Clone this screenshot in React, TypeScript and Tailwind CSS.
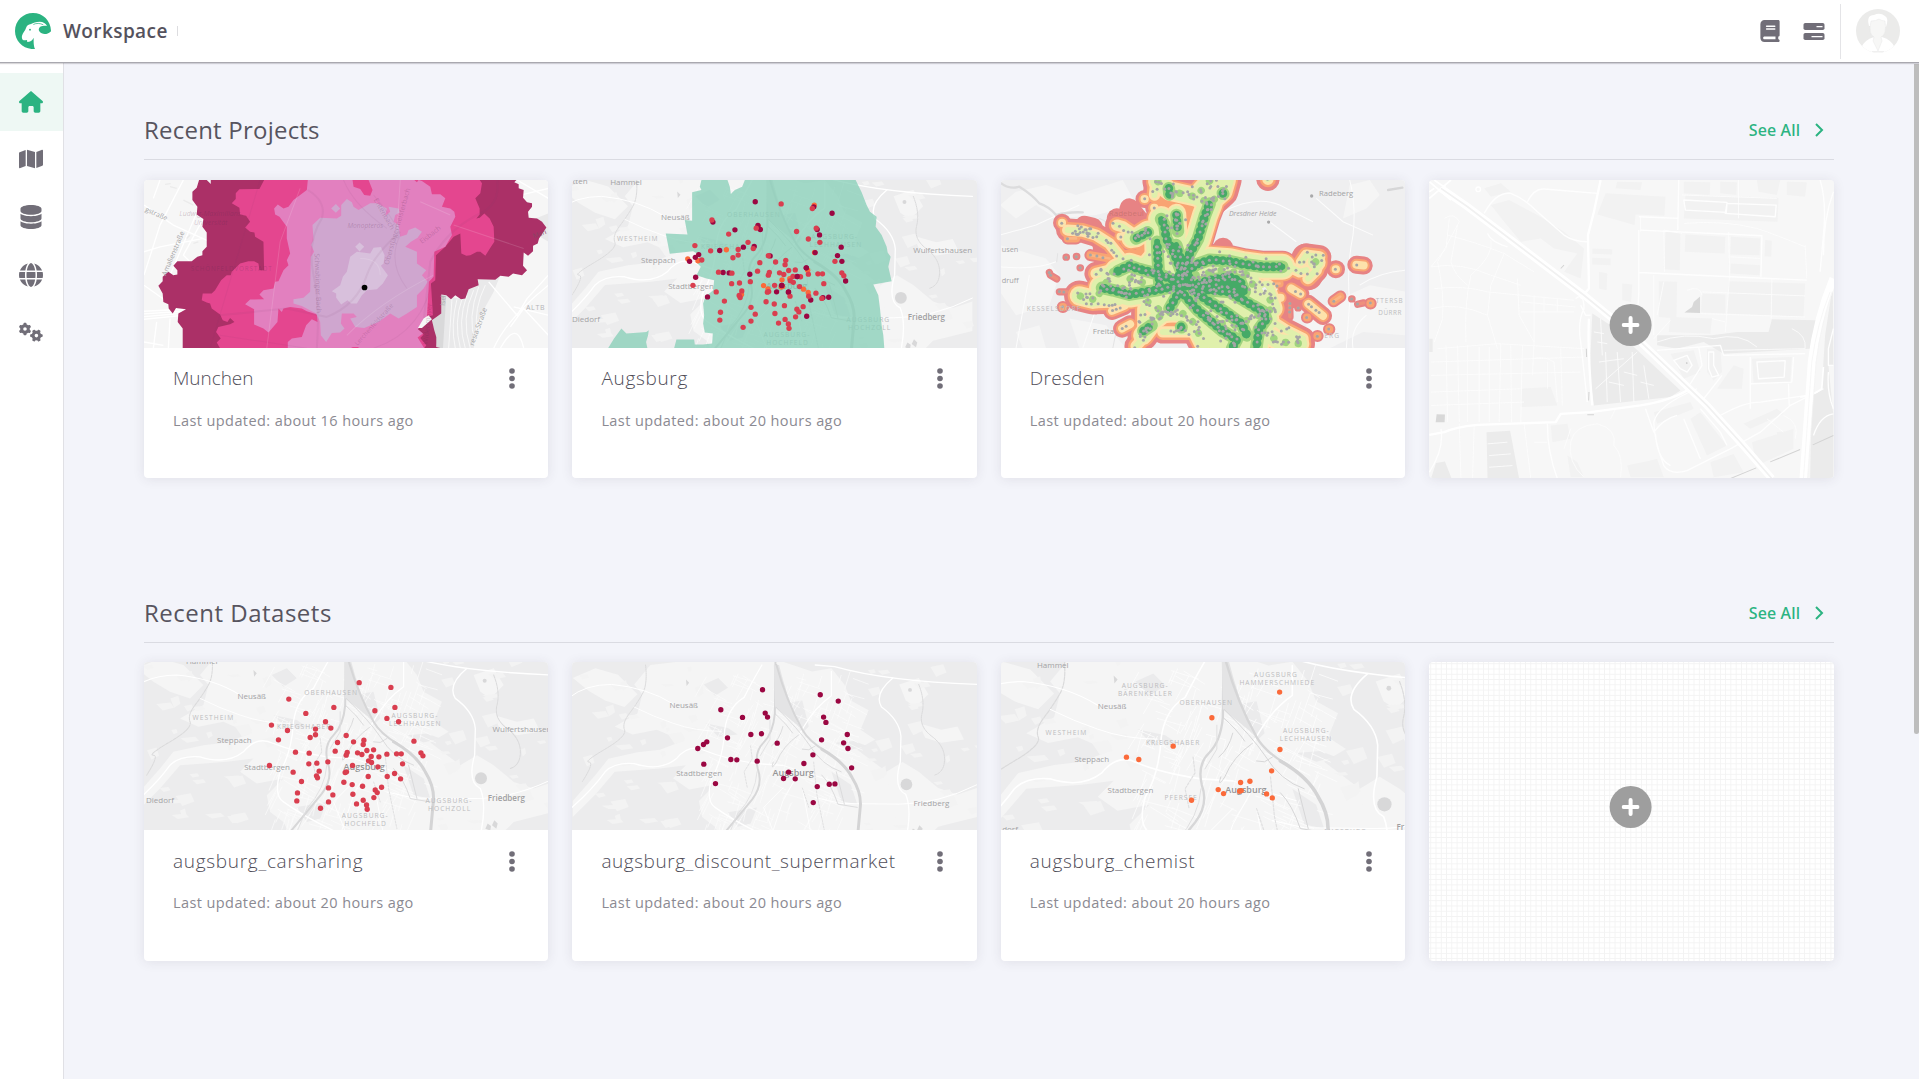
import type { ReactNode } from 'react';
import { FaHouse, FaMap, FaDatabase, FaGlobe, FaGears, FaBook } from 'react-icons/fa6';

type Pt = [number, number];

/* ---------- point data ---------- */

const carsharing: Pt[] = [
  [657, 83], [752, 97], [446, 132], [497, 175], [581, 157], [704, 167], [764, 157], [740, 190], [775, 200], [394, 210],
  [442, 226], [415, 254], [556, 200], [572, 219], [526, 222], [526, 239], [510, 247], [592, 262], [618, 241], [640, 260],
  [671, 255], [669, 268], [585, 288], [466, 291], [507, 294], [621, 292], [618, 300], [652, 293], [665, 298], [680, 286],
  [700, 284], [693, 304], [716, 305], [740, 297], [769, 296], [783, 296], [821, 258], [842, 293], [848, 302], [787, 326],
  [506, 326], [530, 324], [563, 320], [537, 348], [529, 362], [532, 368], [388, 331], [459, 351], [484, 379], [472, 413],
  [470, 437], [541, 459], [565, 398], [578, 419], [565, 440], [611, 381], [619, 350], [615, 352], [637, 331], [685, 317],
  [694, 322], [713, 335], [684, 364], [741, 364], [763, 355], [781, 371], [636, 388], [667, 393], [638, 417], [649, 446],
  [669, 435], [679, 449], [681, 462], [701, 427], [705, 404], [711, 412], [724, 396],
];

const supermarkets: Pt[] = [
  [583, 104], [756, 119], [810, 138], [458, 164], [523, 187], [591, 174], [598, 186], [766, 186], [773, 202], [548, 238],
  [580, 236], [478, 248], [416, 260], [406, 268], [389, 280], [627, 264], [760, 254], [837, 238], [826, 263], [839, 280],
  [734, 299], [407, 327], [488, 313], [506, 314], [567, 318], [707, 325], [661, 351], [646, 370], [681, 371], [850, 338],
  [442, 385], [747, 394], [783, 387], [800, 386], [735, 442],
];

const chemists: Pt[] = [
  [850, 111], [647, 188], [531, 273], [391, 306], [428, 313], [851, 283], [826, 347], [733, 382], [761, 378], [666, 403],
  [682, 415], [730, 408], [735, 406], [811, 416], [828, 428], [586, 435],
];

const shift = (pts: Pt[], k: number, dx: number, dy: number): Pt[] => pts.map(([x, y]) => [x * k + dx, y * k + dy]);

function Dots({ pts, fill, r = 8 }: { pts: Pt[]; fill: string; r?: number }) {
  return (
    <g fill={fill}>
      {pts.map(([x, y], i) => (
        <circle key={i} cx={x} cy={y} r={r} />
      ))}
    </g>
  );
}

/* Small deterministic generator, so that the scattered stops stay put between renders. */
function makeRandom(seed: number) {
  let s = seed;
  return () => {
    s = (s * 1664525 + 1013904223) % 4294967296;
    return s / 4294967296;
  };
}

/* ---------- map pieces ---------- */

function MapFrame({ children, x = 12, y = 15 }: { children: ReactNode; x?: number; y?: number }) {
  return (
    <svg className="block h-[168.3px] w-full rounded-t" viewBox={`${x} ${y} 1212 504`} preserveAspectRatio="none" aria-hidden="true">
      {children}
    </svg>
  );
}

type Label = { x: number; y: number; t: string; kind?: 'town' | 'district' | 'city' | 'bold' };

function Labels({ items }: { items: Label[] }) {
  return (
    <g fontFamily="'Open Sans', sans-serif" textAnchor="middle">
      {items.map(({ x, y, t, kind = 'town' }, i) => {
        if (kind === 'district')
          return (
            <text key={i} x={x} y={y + 7} fontSize="20" letterSpacing="3" fill="#bcbcbe">
              {t}
            </text>
          );
        if (kind === 'city')
          return (
            <text key={i} x={x} y={y + 9} fontSize="27" fontWeight="600" fill="#959597">
              {t}
            </text>
          );
        if (kind === 'bold')
          return (
            <text key={i} x={x} y={y + 8} fontSize="24" fontWeight="600" fill="#9f9fa1">
              {t}
            </text>
          );
        return (
          <text key={i} x={x} y={y + 8} fontSize="24" fill="#a3a3a5">
            {t}
          </text>
        );
      })}
    </g>
  );
}

const streetRandom = makeRandom(7);
const streets = Array.from({ length: 230 }, () => {
  const x = 400 + streetRandom() * 460;
  const y = 20 + streetRandom() * 500;
  const a = (streetRandom() < 0.5 ? 0.25 : 1.8) + streetRandom() * 0.35;
  const l = 25 + streetRandom() * 60;
  return `M${x.toFixed(0)} ${y.toFixed(0)}l${(Math.cos(a) * l).toFixed(0)} ${(Math.sin(a) * l).toFixed(0)}`;
}).join('');
const patchRandom = makeRandom(91);
const patches = Array.from({ length: 70 }, () => {
  const west = patchRandom() < 0.55;
  const x = west ? patchRandom() * 380 : 880 + patchRandom() * 380;
  const y = patchRandom() * 560;
  const w = 10 + patchRandom() * 38;
  const h = 6 + patchRandom() * 24;
  return `M${x.toFixed(0)} ${y.toFixed(0)}l${w.toFixed(0)} ${(-h / 3).toFixed(0)} ${(w / 4).toFixed(0)} ${h.toFixed(0)} ${(-w * 0.8).toFixed(0)} ${(h / 2).toFixed(0)}z`;
}).join('');

function AugsburgBase({ k = 1, dx = 0, dy = 0 }: { k?: number; dx?: number; dy?: number }) {
  return (
    <>
      <rect x="0" y="0" width="1240" height="540" fill="#ececed" />
      <g transform={`translate(${dx} ${dy}) scale(${k})`} fill="none" strokeLinejoin="round" strokeLinecap="round">
        <g fill="#f5f5f5">
          <path d="M230 0 L400 -20 520 -20 640 -10 730 20 790 10 830 60 850 110 905 140 880 200 925 230 870 262 960 330 985 400 1000 540 860 560 640 560 460 560 430 500 390 470 380 420 430 370 350 385 300 350 340 310 260 320 120 330 60 400 -10 470 -10 420 60 340 100 290 190 270 260 262 330 235 250 200 175 215 120 190 190 150 205 90 180 60Z" />
          <path d="M-10 40 L60 10 130 30 190 90 150 130 90 110 40 80Z M960 330 L1010 300 1060 330 1120 380 1180 400 1240 380 1240 470 1120 500 1080 540 1000 540Z" />
          <path d="M1060 180 L1130 200 1180 190 1200 230 1130 240 1080 225Z M1000 60 L1060 40 1090 90 1050 130 1020 110Z" />
        </g>
        <path fill="#ebebec" d="M400 180 L470 195 500 215 440 222Z M395 60 L440 40 470 70 430 95Z M800 240 L860 235 900 250 850 262Z M470 455 L560 440 540 490 500 500Z M790 330 L850 370 870 430 820 420Z M640 120 L700 110 720 190 700 210Z" />
        <path fill="#f3f3f3" d={patches} />
        <path stroke="#fcfcfc" strokeWidth="2" d={streets} />
        <path
          stroke="#dadadb"
          strokeWidth="3"
          d="M215 0 Q222 60 205 90 T165 150 T150 200 T90 260 T40 300 T20 360 M1060 60 Q1080 110 1070 150 T1100 220 T1140 290 T1110 340"
          strokeDasharray="9 3"
        />
        <g stroke="#fff" strokeWidth="4">
          <path d="M-60 480 Q40 400 90 330 Q120 300 180 305 Q260 330 310 290 Q350 240 400 265 Q460 290 560 305 L640 310" />
          <path d="M575 0 Q540 60 520 100 Q470 130 460 200 Q455 290 420 350 Q400 420 430 440 Q500 490 610 540" />
          <path d="M740 0 L800 5 Q960 50 1240 60" />
          <path d="M790 20 L790 95 Q740 130 705 190 L690 215 M980 40 Q920 90 945 130 Q1000 170 1005 220 L1003 300 Q980 380 1020 400 Q1040 450 1020 540" />
          <path d="M-20 100 Q30 60 110 60 Q220 70 300 120 M740 410 L820 428 1000 430 Q1120 430 1240 370" strokeWidth="3" />
          <path d="M180 130 Q240 160 300 180 Q370 205 450 205 M640 310 L700 330 800 360 M600 540 L640 420 690 330 M620 540 L580 440 640 380 M700 380 L730 540" strokeWidth="2.5" />
        </g>
        <path stroke="#d7d7d8" strokeWidth="6" d="M617 -20 L615 150 Q610 210 580 240 Q550 270 562 320 Q580 370 545 415 Q500 470 450 530" />
        <path stroke="#dfdfe0" strokeWidth="2.5" d="M560 330 Q555 400 500 460 L470 530 M600 170 L600 230 570 280" />
        <path fill="#e4e4e5" d="M612 0 L628 0 Q650 90 690 190 L640 150 615 130Z" />
        <path stroke="#d6d6d7" strokeWidth="6" d="M620 0 Q650 110 700 200 Q720 235 770 265" />
        <path stroke="#d4d4d5" strokeWidth="9" d="M760 260 Q830 300 855 350 Q880 390 880 430 L870 540" />
        <path stroke="#d6d6d7" strokeWidth="2.5" d="M618 130 Q690 200 720 245 Q760 310 820 330 M615 150 Q650 180 670 210 M690 215 Q640 250 620 300 Q600 330 610 300 M700 260 L720 262 740 250 M760 340 Q790 370 810 430 L870 440 M640 190 Q630 230 605 250 M805 330 L830 430" />
        <path stroke="#e0e0e1" strokeWidth="3" strokeDasharray="6 4" d="M540 250 L545 290 520 330 530 380 M735 300 L745 400 770 520 M700 380 L720 440" />
        <g fill="#d8d8d9">
          <circle cx="1022" cy="369" r="18" />
          <circle cx="1033" cy="77" r="6" />
          <path d="M1035 520 L1042 505 1052 512 1050 526Z M1055 510 L1062 495 1072 505 1068 520Z M340 45 L350 55 342 65Z" />
        </g>
      </g>
    </>
  );
}

/* ---------- thumbnails ---------- */

const munichRoads =
  'M12 90 L100 150 320 250 M12 230 L60 215 190 190 M130 15 L60 150 12 300 M60 15 L40 70 M12 330 L110 400 M12 408 L130 402 M12 416 L130 408 M12 424 L130 414 M12 432 L130 420 M12 500 L70 510 M50 440 L40 519 M90 430 L85 519 M180 90 L90 300 M190 130 L130 240 160 270 M1130 15 L1224 70 M1140 60 L1224 40 M1060 519 Q1100 430 1224 330 M1080 519 Q1130 430 1150 519 M1110 455 L1150 400 1224 480 M1045 320 L1130 420 1160 370 1224 300 M1120 395 L1224 420';

function MunichMap() {
  return (
    <MapFrame>
      <rect x="0" y="0" width="1240" height="540" fill="#f6f6f6" />
      <path fill="#e9e9ea" d="M1015 312 L1065 314 1080 300 1060 350 1010 440 1000 519 905 519 918 360 960 372 985 342Z M1185 130 L1224 115 1224 200 1190 180Z" />
      <path fill="#d9d9da" d="M903 358 L918 362 908 519 890 519 875 435 903 415Z" />
      <path fill="none" stroke="#fff" strokeWidth="4" d={munichRoads} />
      <path
        fill="none"
        stroke="#fbfbfb"
        strokeWidth="2.5"
        d="M935 372 L925 519 M950 372 Q930 450 945 519 M965 372 Q940 440 960 519 M980 360 Q950 440 975 519 M1000 345 Q960 430 990 519 M1015 335 Q980 430 1005 500 M1035 330 Q1000 400 1010 470"
      />
      <path fill="none" stroke="#ebebeb" strokeWidth="4" d="M130 75 L160 90 M90 35 L110 40 M75 28 L92 26 M140 190 L150 180 M160 205 L175 200" />
      <path
        fill="#ab3067"
        d="M177 15 L170 38 157 50 157 75 172 95 170 118 190 132 187 155 200 172 200 215 187 228 187 240 172 245 155 258 112 258 100 272 112 285 112 298 100 300 85 290 68 305 68 318 55 332 68 355 70 380 85 387 86 400 98 415 108 398 138 402 115 415 113 440 128 460 128 519 903 519 888 515 888 485 882 465 875 435 903 415 903 358 918 360 932 372 945 360 962 372 975 370 985 342 1015 330 1012 312 1065 314 1080 302 1105 305 1118 295 1145 300 1160 285 1148 272 1150 232 1163 242 1178 228 1178 212 1192 205 1196 190 1218 157 1205 140 1190 130 1165 128 1163 110 1175 95 1175 85 1160 82 1148 68 1150 45 1135 40 1135 28 1122 22 1128 15Z"
      />
      <path fill="#f6f6f6" d="M200 15 L212 27 212 15Z" />
      <path fill="#e4468f" d="M372 15 L358 42 298 43 287 55 287 72 275 85 298 98 300 118 318 122 330 140 315 157 330 170 343 172 345 185 370 200 372 285 358 285 355 265 342 258 325 258 300 265 275 290 272 300 260 300 243 315 225 345 215 355 188 355 185 375 200 382 210 385 215 400 240 418 248 435 262 440 270 428 283 440 270 447 235 455 228 470 242 490 230 502 240 519 852 519 858 510 840 488 850 478 828 458 858 425 878 420 872 325 885 315 887 240 915 215 940 185 960 175 963 235 978 242 990 240 1010 230 1020 230 1035 242 1052 215 1062 200 1060 155 1048 130 1032 115 1018 128 1008 130 1018 118 1018 100 1005 70 1020 55 1025 25 1018 15Z" />
      <path fill="#e280bf" d="M503 15 L500 45 460 75 445 95 430 100 413 88 402 100 405 118 418 125 440 155 440 190 450 235 440 255 445 270 430 285 415 318 405 320 400 340 370 345 358 358 372 372 330 373 315 387 342 402 342 448 370 460 385 472 412 440 415 400 425 410 430 400 450 395 485 400 500 408 530 418 532 440 515 432 498 450 485 485 455 490 443 500 443 519 640 519 632 515 657 515 652 519 852 519 832 487 848 475 833 462 860 425 866 320 880 305 882 230 915 215 935 180 930 155 945 125 942 110 930 100 905 95 915 70 900 58 875 58 870 35 845 18 835 15 830 22 822 15Z" />
      <path fill="#e4468f" d="M637 15 L640 35 660 42 672 60 690 62 697 45 685 15Z" />
      <path
        fill="#cfa6cf"
        d="M517 150 L540 128 590 130 603 122 603 90 620 72 635 82 640 95 655 105 690 85 710 85 740 100 735 122 750 110 745 95 775 100 778 112 765 120 760 140 775 150 780 185 800 178 805 165 825 157 845 170 832 188 812 200 795 215 830 230 830 265 858 285 845 300 862 320 850 340 830 360 830 395 800 415 775 430 750 415 715 440 672 458 645 455 630 430 650 425 640 415 605 415 602 445 613 460 600 472 575 473 558 500 542 480 540 440 528 415 485 392 460 385 460 372 490 368 510 350 512 245 522 230 513 210 520 195Z M573 100 L587 87 600 100 587 113Z"
      />
      <path
        fill="#d8c0dc"
        d="M575 348 L600 330 608 305 620 290 630 245 650 230 690 235 700 218 722 216 733 240 730 265 722 272 743 300 728 325 710 342 680 345 665 360 650 385 632 385 622 375 603 388 588 368 588 355Z M645 215 L658 202 672 215 658 229Z"
      />
      <g fill="none" stroke="#7b3b70" strokeOpacity="0.08" strokeWidth="6">
        <path d="M503 45 Q560 80 545 130 Q500 200 520 300 Q540 380 530 519 M780 170 Q700 240 680 300 Q650 390 560 425 L440 400 240 420 M1070 15 Q1080 80 1030 110 Q920 160 870 260 L850 440" />
        <path strokeWidth="3" d="M700 60 Q760 130 780 180 Q740 260 800 340 M610 15 Q640 90 740 160 M240 480 L500 519 M360 15 L210 519 M700 519 Q850 470 880 300" />
      </g>
      <g stroke="#fff" strokeOpacity="0.14" strokeWidth="3" fill="none">
        <path d="M660 250 Q720 250 720 300 M840 80 L930 120 M940 150 Q1060 190 1150 220 M480 40 L420 200 380 519 M620 480 Q720 380 880 300 M780 15 L770 170" />
      </g>
      <path fill="#f6f6f6" d="M833 458 L850 430 865 420 875 432 845 458Z" />
      <g fontFamily="'Open Sans', sans-serif" fontSize="23" fill="#a3a3a5">
        <text x="14" y="108" transform="rotate(24 14 108)" fontSize="20">gstraße</text>
        <text x="78" y="303" transform="rotate(-67 78 303)" fontSize="21">Amalienstraße</text>
        <text x="1000" y="512" transform="rotate(-70 1000 512)" fontSize="21">resia-Straße</text>
        <text x="1180" y="190" transform="rotate(-20 1180 190)" fontSize="20" fill="#8a4464">Mari</text>
        <text x="914" y="392" transform="rotate(-87 914 392)" fontSize="20">Isel</text>
        <g fill="#5b2a50" fillOpacity="0.26">
          <text x="118" y="122" fontSize="21" fontStyle="italic">Ludwig-Maximilians-</text>
          <text x="162" y="150" fontSize="21" fontStyle="italic">Universität</text>
          <text x="152" y="288" fontSize="19" letterSpacing="2.4">SCHÖNFELDVORSTADT</text>
          <text x="622" y="160" fontSize="20" fontStyle="italic">Monopteros</text>
          <text x="523" y="235" transform="rotate(88 523 235)" fontSize="21">Schwabinger Bach</text>
          <text x="745" y="270" transform="rotate(-74 745 270)" fontSize="21">Oberstjägermeisterbach</text>
          <text x="845" y="207" transform="rotate(-38 845 207)" fontSize="21">Eisbach</text>
          <text x="652" y="512" transform="rotate(-48 652 512)" fontSize="19">Lerchenfeldstraße</text>
          <text x="700" y="75" transform="rotate(60 700 75)" fontSize="21">Entenbach</text>
          <text x="862" y="508" transform="rotate(-84 862 508)" fontSize="21">Widenmayer</text>
        </g>
        <text x="1157" y="404" fontSize="21" letterSpacing="2" fill="#b4b4b6">ALTB</text>
      </g>
      <circle cx="673" cy="337" r="8.5" fill="#000" />
    </MapFrame>
  );
}

function AugsburgProjectMap() {
  return (
    <MapFrame>
      <AugsburgBase k={0.983} dx={-7} dy={5} />
      <Labels
        items={[
          { x: 36, y: 19, t: 'tten' },
          { x: 174, y: 23, t: 'Hammel' },
          { x: 322, y: 127, t: 'Neusäß' },
          { x: 271, y: 257, t: 'Steppach' },
          { x: 369, y: 334, t: 'Stadtbergen' },
          { x: 54, y: 431, t: 'Diedorf' },
          { x: 1123, y: 225, t: 'Wulfertshausen' },
          { x: 1074, y: 425, t: 'Friedberg', kind: 'bold' },
          { x: 655, y: 333, t: 'Augsburg', kind: 'city' },
          { x: 209, y: 190, t: 'WESTHEIM', kind: 'district' },
          { x: 557, y: 118, t: 'OBERHAUSEN', kind: 'district' },
          { x: 480, y: 215, t: 'KRIEGSHABER', kind: 'district' },
          { x: 799, y: 184, t: 'AUGSBURG-', kind: 'district' },
          { x: 803, y: 208, t: 'LECHHAUSEN', kind: 'district' },
          { x: 900, y: 433, t: 'AUGSBURG', kind: 'district' },
          { x: 904, y: 457, t: 'HOCHZOLL', kind: 'district' },
          { x: 656, y: 477, t: 'AUGSBURG-', kind: 'district' },
          { x: 658, y: 501, t: 'HOCHFELD', kind: 'district' },
        ]}
      />
      <path
        fill="#86cfb7"
        fillOpacity="0.76"
        d="M372 52 L400 45 395 35 400 15 478 15 485 35 488 57 500 45 522 35 530 15 862 15 880 52 895 90 905 110 925 125 922 155 940 180 955 215 958 232 967 245 960 275 970 318 915 328 930 360 935 400 940 450 945 480 948 519 318 519 325 493 378 493 380 508 405 508 432 505 434 475 410 472 405 445 408 420 405 385 412 365 435 345 438 315 415 310 385 300 398 275 385 262 395 240 375 228 305 236 293 175 358 178 350 135 372 137Z M120 519 L138 490 160 460 175 475 235 470 242 465 240 480 234 500 238 519Z"
      />
      <Dots pts={shift(chemists, 0.826, 36, -1.6)} fill="#fb6a3a" />
      <Dots pts={shift(supermarkets, 1.0145, -30.3, -25.4)} fill="#9b0742" />
      <Dots pts={shift(carsharing, 0.983, -7, 5)} fill="#d93e4f" />
      <Dots pts={[[641, 331], [661, 350], [687, 304], [714, 278]]} fill="#9b0742" />
    </MapFrame>
  );
}

function CarsharingMap() {
  return (
    <MapFrame y={21}>
      <AugsburgBase />
      <Labels
        items={[
          { x: 185, y: 18, t: 'Hammel' },
          { x: 335, y: 124, t: 'Neusäß' },
          { x: 283, y: 257, t: 'Steppach' },
          { x: 381, y: 335, t: 'Stadtbergen' },
          { x: 60, y: 434, t: 'Diedorf' },
          { x: 1145, y: 223, t: 'Wulfertshausen' },
          { x: 1098, y: 428, t: 'Friedberg', kind: 'bold' },
          { x: 672, y: 334, t: 'Augsburg', kind: 'city' },
          { x: 220, y: 188, t: 'WESTHEIM', kind: 'district' },
          { x: 573, y: 114, t: 'OBERHAUSEN', kind: 'district' },
          { x: 492, y: 215, t: 'KRIEGSHABER', kind: 'district' },
          { x: 824, y: 183, t: 'AUGSBURG-', kind: 'district' },
          { x: 825, y: 207, t: 'LECHHAUSEN', kind: 'district' },
          { x: 926, y: 436, t: 'AUGSBURG-', kind: 'district' },
          { x: 928, y: 460, t: 'HOCHZOLL', kind: 'district' },
          { x: 675, y: 481, t: 'AUGSBURG-', kind: 'district' },
          { x: 676, y: 505, t: 'HOCHFELD', kind: 'district' },
        ]}
      />
      <Dots pts={carsharing} fill="#d93e4f" />
    </MapFrame>
  );
}

function SupermarketMap() {
  return (
    <MapFrame y={21}>
      <AugsburgBase k={0.969} dx={24} dy={30} />
      <Labels
        items={[
          { x: 347, y: 150, t: 'Neusäß' },
          { x: 393, y: 355, t: 'Stadtbergen' },
          { x: 1089, y: 443, t: 'Friedberg' },
          { x: 675, y: 353, t: 'Augsburg', kind: 'city' },
        ]}
      />
      <Dots pts={supermarkets} fill="#9b0742" />
    </MapFrame>
  );
}

function ChemistMap() {
  return (
    <MapFrame x={15} y={21}>
      <AugsburgBase k={1.19} dx={-52} dy={8} />
      <Labels
        items={[
          { x: 170, y: 31, t: 'Hammel' },
          { x: 348, y: 155, t: 'Neusäß' },
          { x: 287, y: 313, t: 'Steppach' },
          { x: 403, y: 406, t: 'Stadtbergen' },
          { x: 42, y: 522, t: 'dorf' },
          { x: 1212, y: 515, t: 'Fr', kind: 'bold' },
          { x: 749, y: 404, t: 'Augsburg', kind: 'city' },
          { x: 211, y: 232, t: 'WESTHEIM', kind: 'district' },
          { x: 447, y: 91, t: 'AUGSBURG-', kind: 'district' },
          { x: 448, y: 115, t: 'BÄRENKELLER', kind: 'district' },
          { x: 630, y: 143, t: 'OBERHAUSEN', kind: 'district' },
          { x: 531, y: 262, t: 'KRIEGSHABER', kind: 'district' },
          { x: 839, y: 58, t: 'AUGSBURG', kind: 'district' },
          { x: 843, y: 82, t: 'HAMMERSCHMIEDE', kind: 'district' },
          { x: 930, y: 227, t: 'AUGSBURG-', kind: 'district' },
          { x: 929, y: 251, t: 'LECHHAUSEN', kind: 'district' },
          { x: 555, y: 426, t: 'PFERSEE', kind: 'district' },
          { x: 1046, y: 528, t: 'AUGSBURG', kind: 'district' },
        ]}
      />
      <Dots pts={chemists} fill="#fb6a3a" />
    </MapFrame>
  );
}

/* Transit lines of Dresden, from the densest service to the thinnest. */
const trunkLines: Pt[][] = [
  [[560, 310], [575, 245], [605, 192], [617, 152], [626, 122], [640, 86]],
  [[560, 300], [600, 268], [640, 254], [700, 258], [740, 267], [800, 275], [858, 275]],
  [[590, 330], [640, 315], [700, 305], [732, 318], [745, 350]],
  [[580, 330], [640, 345], [700, 350], [770, 392], [802, 410], [810, 432], [788, 462], [780, 519]],
  [[590, 345], [640, 380], [690, 412], [735, 445], [752, 480]],
  [[565, 360], [605, 405], [640, 435], [680, 468], [722, 492], [708, 519]],
  [[545, 320], [490, 298], [430, 282], [400, 272], [365, 288]],
  [[550, 330], [480, 345], [400, 358], [350, 345], [318, 338]],
  [[560, 300], [530, 225], [510, 190], [505, 150], [495, 132]],
  [[490, 330], [485, 250], [483, 200]],
  [[570, 300], [540, 210]],
  [[560, 330], [520, 400]],
  [[600, 335], [660, 330], [730, 345]],
];
const trunkStops: Pt[][] = [
  [[518, 40], [520, 58]],
  [[541, 120], [545, 168]],
  [[680, 55], [681, 56]],
  [[455, 172], [420, 190]],
  [[442, 467], [466, 450]],
  [[555, 455], [556, 456]],
];
const localLines: Pt[][] = [
  [[485, 20], [520, 48], [600, 66], [640, 86], [680, 50], [690, 15]],
  [[640, 18], [612, 50]],
  [[541, 115], [545, 180]],
  [[455, 165], [420, 188], [405, 190]],
  [[455, 380], [500, 410], [560, 415], [590, 440], [620, 500]],
  [[520, 400], [470, 440], [440, 480]],
  [[380, 340], [400, 310], [450, 325]],
  [[350, 290], [325, 330], [300, 370]],
  [[600, 300], [680, 285], [760, 300], [780, 360]],
  [[640, 440], [720, 450], [830, 400], [810, 340]],
  [[800, 470], [850, 500], [910, 505]],
  [[290, 372], [250, 362]],
  [[958, 260], [959, 261]],
];
const minorLines: Pt[][] = [
  [[372, 245], [340, 205], [300, 180], [260, 168], [215, 165]],
  [[362, 150], [380, 155], [430, 190]],
  [[245, 362], [300, 382], [370, 380]],
  [[915, 262], [930, 240], [970, 245], [960, 285], [935, 310]],
  [[880, 275], [910, 290], [930, 285]],
  [[300, 295], [340, 285]],
  [[420, 512], [440, 490], [440, 400]],
  [[640, 60], [640, 15]],
  [[480, 15], [475, 60]],
  [[920, 490], [870, 465], [830, 440]],
  [[815, 12], [815, 13]],
  [[590, 470], [540, 470], [500, 470]],
];
const rural: Pt[][] = [
  [[445, 72], [446, 72]],
  [[198, 143], [198, 144]],
  [[474, 98], [475, 98]],
  [[373, 184], [374, 184]],
  [[1018, 282], [1019, 282]],
  [[1080, 269], [1102, 271]],
  [[822, 368], [853, 368]],
  [[912, 356], [885, 340]],
  [[936, 386], [980, 422]],
  [[348, 407], [385, 392]],
  [[378, 460], [402, 447]],
];
const remote: Pt[][] = [
  [[283, 240], [340, 250]],
  [[200, 395], [201, 395]],
  [[215, 190], [240, 190]],
  [[1012, 378], [1032, 364]],
  [[1122, 385], [1123, 385]],
  [[998, 462], [999, 462]],
  [[963, 482], [964, 482]],
  [[932, 427], [933, 427]],
  [[780, 330], [850, 325]],
];
const lone: Pt[][] = [
  [[210, 246], [211, 246]],
  [[241, 244], [242, 244]],
  [[252, 278], [253, 278]],
  [[160, 292], [163, 300], [182, 311]],
  [[190, 350], [215, 350]],
  [[1066, 371], [1067, 371]],
  [[1084, 387], [1102, 383]],
  [[880, 384], [881, 425]],
  [[905, 398], [906, 398]],
];
const toPath = (lines: Pt[][]) => lines.map((l) => 'M' + l.map((p) => p.join(' ')).join('L')).join('');
const trunkPath = toPath(trunkLines);
const trunkStopPath = toPath(trunkStops);
const localPath = toPath(localLines);
const minorPath = toPath(minorLines);
const ruralPath = toPath(rural);
const remotePath = toPath(remote);
const lonePath = toPath(lone);
const corePath = 'M490 130 L560 230 600 200 610 260 560 310 420 270 480 200Z M420 300 L560 340 430 350 340 320Z M560 350 L640 470 700 519 640 519 560 430 480 440Z M640 400 L760 470 790 430 700 370Z';

const stopRandom = makeRandom(2024);
function scatter(lines: Pt[][], step: number, spread: number): Pt[] {
  const out: Pt[] = [];
  for (const line of lines)
    for (let i = 1; i < line.length; i++) {
      const [x0, y0] = line[i - 1];
      const [x1, y1] = line[i];
      const n = Math.max(1, Math.round(Math.hypot(x1 - x0, y1 - y0) / step));
      for (let j = 0; j < n; j++)
        out.push([
          x0 + ((x1 - x0) * j) / n + (stopRandom() - 0.5) * spread,
          y0 + ((y1 - y0) * j) / n + (stopRandom() - 0.5) * spread,
        ]);
    }
  return out;
}
const dresdenStops: Pt[] = [
  ...scatter(trunkLines, 19, 3),
  ...scatter(trunkStops, 18, 2),
  ...scatter(trunkLines, 17, 70),
  ...scatter(localLines, 14, 16),
  ...scatter(localLines, 18, 60),
  ...scatter(minorLines, 14, 24),
  ...scatter([[[235, 165], [300, 175]]], 4, 26),
  ...scatter(rural, 15, 3),
  ...scatter(remote, 18, 3),
  ...scatter(lone, 15, 2),
];

function DresdenMap() {
  return (
    <MapFrame x={15}>
      <rect x="0" y="0" width="1240" height="540" fill="#efeff0" />
      <path fill="#f5f5f5" d="M12 90 L60 130 120 90 180 130 300 120 420 90 380 15 240 60 150 30 60 50Z M12 210 L150 250 190 300 160 390 60 420 12 350Z M930 420 L1010 380 1120 330 1230 350 1230 480 1100 470 1000 519 930 519Z M1040 130 L1110 100 1150 60 1120 15 1060 30Z M220 430 L330 450 390 519 250 519Z M60 470 L130 450 150 519 80 519Z" />
      <g fill="none" stroke="#fcfcfc" strokeWidth="3">
        <path d="M12 275 Q120 285 180 260 M1060 15 Q1080 90 1070 180 Q1050 280 1060 380 L1050 519 M1090 330 Q1150 290 1230 285 M12 180 L120 150 250 90 M680 110 Q780 60 850 90 L950 140 M820 140 L900 200 M1110 420 Q1060 460 1070 519 M300 400 L260 519 M100 300 L60 519 M960 70 L1040 140 1130 180" />
      </g>
      <g fill="none" strokeLinecap="round">
        <path stroke="#dcdcdd" strokeWidth="7" d="M12 22 Q40 45 70 35 Q110 60 130 85 Q160 95 180 120 Q215 110 260 112" />
        <path stroke="#e3e3e4" strokeWidth="3" d="M310 130 Q340 140 350 170 M350 519 L360 470 M182 260 L185 235" />
        <path stroke="#d6d6d7" strokeWidth="7" d="M1175 45 L1218 38" />
      </g>
      <g strokeLinejoin="round" strokeLinecap="round" fill="none">
        <g stroke="#e78384">
          <path strokeWidth="96" d={trunkPath} />
          <path strokeWidth="92" d={localPath} />
          <path strokeWidth="70" d={minorPath} />
          <path strokeWidth="54" d={ruralPath} />
          <path strokeWidth="36" d={remotePath} />
          <path strokeWidth="22" d={lonePath} />
          <path strokeWidth="60" d="M362 130 L405 150 M265 152 L290 158 M680 218 L681 218 M320 215 L330 300 M345 180 L385 220 M400 100 L440 150" strokeOpacity="0.999" />
          <path strokeWidth="90" d="M930 250 L955 262 935 300" />
          <path strokeWidth="30" d="M790 325 L880 330 950 390 M830 400 L900 470 940 490 M840 370 L900 385" />
        </g>
        <g stroke="#f9a473">
          <path strokeWidth="88" d={trunkPath} />
          <path strokeWidth="70" d={localPath} />
          <path strokeWidth="48" d={minorPath} />
          <path strokeWidth="36" d={ruralPath} />
          <path strokeWidth="24" d={remotePath} />
          <path strokeWidth="10" strokeOpacity="0.4" d={lonePath} />
          <path strokeWidth="40" d="M365 150 L400 165 M375 245 L430 245 M440 220 L460 260 M600 80 L560 170 M500 90 L520 130" />
          <path fill="#f9a473" strokeWidth="20" d="M480 90 L600 90 590 170 540 170Z" />
        </g>
        <g stroke="#fde2ab" fill="none">
          <path strokeWidth="78" d={trunkPath} />
          <path strokeWidth="58" d={localPath} />
          <path strokeWidth="34" d={minorPath} />
          <path strokeWidth="24" d={ruralPath} />
          <path strokeWidth="8" d={remotePath} strokeOpacity="0.3" />
          <path strokeWidth="14" d={corePath} fill="#fde2ab" />
        </g>
        <g stroke="#e0f0ac">
          <path strokeWidth="66" d={trunkPath} />
          <path strokeWidth="46" d={localPath} />
          <path strokeWidth="18" d={minorPath} />
          <path strokeWidth="2" d={corePath} fill="#e0f0ac" />
        </g>
        <g stroke="#9fd47e">
          <path strokeWidth="38" d={trunkPath} />
          <path strokeWidth="38" d={trunkStopPath} />
          <path strokeWidth="22" d={localPath} strokeDasharray="0.1 38" />
        </g>
        <g stroke="#46aa67">
          <path strokeWidth="27" strokeDasharray="0.1 19" d={trunkPath} />
          <path strokeWidth="18" d={trunkPath} />
          <path strokeWidth="26" strokeDasharray="0.1 18" d={trunkStopPath} />
        </g>
        <circle cx="562" cy="315" r="32" fill="#46aa67" stroke="none" />
        <path fill="#46aa67" d="M600 325 L700 300 748 335 745 365 690 345Z" />
      </g>
      <path fill="#efeff0" d="M797 340 L806 335 812 343 803 350Z M838 341 L845 340 842 347Z" />
      <Dots pts={dresdenStops} fill="#a5a5a6" r={4.5} />
      <g fontFamily="'Open Sans', sans-serif" fontSize="24" fill="#a3a3a5">
        <text x="968" y="62" fontSize="23">Radeberg</text>
        <text x="698" y="122" fontStyle="italic" fontSize="21">Dresdner Heide</text>
        <text x="17" y="230" fontSize="22">usen</text>
        <text x="17" y="323" fontSize="22">druff</text>
        <text x="290" y="475">Freita</text>
        <text x="338" y="123" fill="#8a5048" fillOpacity="0.3">Radebeul</text>
        <g fontSize="20" letterSpacing="3" fill="#bcbcbe">
          <text x="92" y="407">KESSELSDORF</text>
          <text x="1138" y="383" fontSize="19">TTERSB</text>
          <text x="1146" y="419" fontSize="19" letterSpacing="1.5">DÜRRR</text>
          <text x="984" y="489">ERG</text>
        </g>
      </g>
      <Dots pts={[[946, 63], [817, 141]]} fill="#a9a9aa" r={5} />
    </MapFrame>
  );
}

/* Pale street map behind the "new project" button. */
function BlankMap() {
  return (
    <svg className="block h-full w-full rounded" viewBox="14 15 1216 894" preserveAspectRatio="none" aria-hidden="true">
      <rect x="0" y="0" width="1240" height="920" fill="#f7f7f7" />
      <g fill="#f2f2f2">
        <path d="M545 55 L725 65 722 122 635 118 632 150 520 118Z M580 20 L655 22 650 45 575 40Z M785 60 L1065 68 1062 140 780 130Z M725 170 L770 172 768 285 722 282Z M785 178 L905 185 903 235 783 230Z M922 185 L1010 190 1008 240 920 238Z M922 265 L1010 270 1008 300 920 295Z M705 318 L760 320 758 430 705 425Z M915 318 L1145 325 1140 425 910 415Z M835 355 L905 358 905 415 832 412Z M740 425 L865 430 860 475 735 470Z M255 75 L340 120 420 170 480 220 470 310 420 290 460 235 390 220 350 190 290 200 240 140 200 90Z M740 535 L810 525 830 590 780 610Z M850 520 L890 520 895 590 870 615 850 590Z M985 550 L1105 545 1100 620 990 625Z M880 640 L930 570 960 580 955 640Z M690 710 L800 680 810 700 700 745Z M800 730 L830 710 910 810 850 840Z M960 745 L1060 700 1080 715 980 760Z M700 850 L610 870 620 905 720 905Z M860 860 L930 835 960 890 870 905Z M180 40 L230 25 260 50 200 65Z" />
        <path d="M525 290 L550 295 548 345 525 340Z M595 325 L625 328 622 380 595 375Z M505 220 L565 222 565 238 505 236Z M505 248 L560 250 560 270 505 268Z M1025 195 L1045 197 1043 245 1023 243Z M1060 770 L1110 765 1105 820 1060 815Z M290 640 L380 635 400 690 290 695Z M380 750 L430 745 440 790 385 800Z M430 840 L460 860 480 905 440 905Z M780 20 L860 22 858 60 780 55Z M890 20 L940 22 938 60 890 55Z M1000 15 L1070 15 1060 60 1005 50Z M1090 20 L1150 22 1145 65 1090 60Z M985 800 L1110 760 1110 820 1000 870Z" />
      </g>
      <g fill="#ebebeb">
        <path d="M505 415 L560 450 770 645 740 665 510 690 497 600Z" />
        <path d="M700 480 L865 480 940 470 1035 470 1045 432 1178 435 1160 520 900 535 840 500 760 520 700 510Z" />
        <path d="M1228 330 L1205 480 1195 640 1165 660 1160 909 1230 909 1230 720 1215 570 1230 570Z" />
        <path d="M187 770 L258 766 285 909 190 909Z M20 909 L35 862 62 858 82 909Z M15 490 L25 490 25 530 15 530Z" />
      </g>
      <path fill="#d8d8d8" d="M782 412 L805 395 810 380 829 364 829 413Z M34 740 L37 716 62 717 61 740Z" />
      <g fill="none" stroke="#fcfcfc" strokeWidth="2.5">
        <path d="M60 130 Q90 110 105 140 L40 260 Q60 350 55 430 L30 500 M70 180 Q150 200 240 235 L330 290 M75 130 L65 220 20 275 M20 275 Q110 260 200 300 L290 330 M200 195 Q210 240 140 300 Q120 380 125 500 M100 150 L80 260 Q90 300 130 330 M240 235 L200 330 190 420 220 520 M280 310 L285 420 330 500 M20 400 Q100 380 190 420 M30 340 Q120 330 190 350 L290 360 450 375 M290 380 L455 395 M290 410 L450 410 M330 360 L330 500 325 600 M360 365 L360 410 M400 370 L400 410 M40 520 L220 505 480 520 M65 510 L70 740 M100 510 L105 740 M130 510 L130 740 M165 515 L165 740 M195 515 L195 740 M230 505 L225 740 M260 510 L262 740 M295 510 L290 740 M325 550 Q360 540 390 560 L400 680 M370 560 L370 640 M410 520 L415 690 M20 560 L480 545 M20 600 L470 590 M20 650 L290 640 M20 690 L300 680" />
        <path d="M545 530 L550 680 M580 530 L590 680 M625 530 L630 680 M660 570 L675 670 M530 430 L535 540 M515 640 L640 530 M510 470 L540 475 M520 500 L550 505 M525 560 L600 550 M555 620 L600 630 M600 590 L640 600 M650 620 L690 630 M740 435 L690 490 M700 500 Q780 470 870 490 Q950 470 1000 515 M1105 460 Q1150 480 1145 520 L900 525" />
        <path d="M440 800 Q450 750 520 745 Q580 760 570 810 Q600 840 590 905 M440 800 Q430 860 480 905 M915 170 L918 300 905 470 M1045 310 L1043 430 M835 350 L1145 362 M830 415 L1145 425 M865 430 L905 440 M775 175 L720 165 722 290 M945 15 L945 130 M775 60 L1060 70 M1145 210 L1150 310 M780 145 Q900 135 1000 160 Q1060 180 1145 215 M790 345 Q830 330 835 360 M720 320 L700 420 M105 745 L110 909 M150 745 L145 909 M300 745 L320 909 M330 800 L370 800 M190 805 L250 800 M195 840 L260 835 M195 875 L265 870 M440 760 L420 820 M575 700 L560 730 M920 245 L1010 250 M690 300 L690 480 M650 125 L650 170 M1080 720 Q1130 740 1115 790 M1030 730 L1080 770" />
      </g>
      <g fill="none" stroke="#fefefe" strokeWidth="4" strokeLinejoin="round">
        <path d="M180 115 Q215 50 260 55 Q300 70 340 110 L420 180 Q450 200 490 200 M310 80 Q330 40 360 42 L520 55 M190 175 Q200 200 250 215 M780 75 L910 82 908 112 785 105Z M910 85 L1058 90 1055 125 905 115Z M765 15 L762 165 M650 165 L1015 182 1012 305 M645 165 L645 350 640 440 M645 292 L1150 315 M645 125 L765 130" />
        <path d="M820 640 Q700 690 690 740 Q690 790 720 870 Q740 900 790 885 L920 820 1010 770 1100 690 1200 640 M665 700 L690 770 Q720 730 760 720 M780 730 L830 850 M695 775 Q700 850 740 870 M700 525 L890 510 900 540 1145 535 M825 515 L835 570 790 640 M980 545 L980 700 M890 720 Q960 680 1010 680 L1150 660 M1095 625 L1097 690 M980 625 L1105 620 1110 545 M895 600 L840 670 M750 555 L790 540 805 570 790 590 770 580Z M1000 560 L1085 556 1082 605 1005 610Z M855 530 L870 530 870 570 885 600 865 605 855 580Z M830 700 L890 770 910 810" />
        <path d="M1230 460 L1215 520 1215 570 1230 570 M1215 590 Q1210 650 1230 700 M1170 780 Q1190 720 1230 715 M1190 15 Q1210 80 1200 180 L1190 290 M1230 50 Q1200 130 1200 240" />
        <path d="M15 890 Q60 820 50 760 M370 745 Q370 830 400 909 M455 370 Q480 350 480 400 Q460 440 470 500 L490 680 M470 390 L485 420 500 420" />
      </g>
      <g fill="none" stroke="#fff" strokeWidth="7" strokeLinejoin="round">
        <path d="M530 15 L510 110 492 180 495 340 470 370 M495 430 Q490 520 505 690 M15 778 L60 770 Q90 755 160 748 L395 740 410 715 500 710 650 690 Q740 675 790 645" />
        <path d="M15 50 L30 40 M30 15 Q70 45 60 30 M15 20 L80 75 M15 70 L80 15" strokeWidth="5" />
        <path d="M1230 310 Q1180 430 1165 560 L1140 909" strokeWidth="24" />
        <path d="M1200 575 L1195 640 Q1170 660 1130 665" strokeWidth="5" />
      </g>
      <g fill="none">
        <path stroke="#fff" strokeWidth="22" d="M50 40 L130 95 480 360 640 490 850 690 950 800 1045 909" />
        <path stroke="#f1f1f1" strokeWidth="5" d="M50 40 L130 95 480 360 640 490 850 690 950 800 1045 909" />
        <path stroke="#f3f3f3" strokeWidth="2" d="M1226 350 Q1192 450 1178 560 L1152 909 M1220 350 Q1180 450 1165 560 L1140 909" />
        <path stroke="#d3d3d3" strokeWidth="3" d="M1040 859 L1130 822 M1168 808 L1230 780 M920 909 L998 877 M410 280 L420 270 M490 718 L510 718 M487 520 L488 545 M495 650 L494 675" />
      </g>
      <circle cx="789" cy="563" r="2.5" fill="#c4c4c4" />
      <circle cx="162" cy="43" r="7" fill="none" stroke="#fff" strokeWidth="4" />
    </svg>
  );
}

/* ---------- page furniture ---------- */

function Logo() {
  return (
    <svg className="h-9 w-9" viewBox="45 39 108 108" aria-hidden="true">
      <path
        fill="#2bb381"
        d="M105 147C73 150 45 125 45 93 45 62 70 39 99 39c30 0 53 23 54 53 0 2-1 3-2 4-7 6-18 8-26 4-8-4-11-11-7-17 4-5 13-7 23-5-3-8-12-13-22-13-11 0-20 3-26 7-8 1-13 5-15 12-2 8-10 15-12 23-1 6 0 11 3 13 4 2 8 0 11 0 2 2 2 4 1 6 9 0 17-5 20-13 0 11-1 23 4 34Z"
      />
      <path fill="none" stroke="#2bb381" strokeWidth="2.2" strokeLinecap="round" d="M101 73c8-4 19-4 28 1" />
      <circle cx="90" cy="89" r="2.8" fill="#2bb381" />
    </svg>
  );
}

function ServerIcon() {
  return (
    <svg className="h-[17px] w-[22px]" viewBox="0 0 22 17" aria-hidden="true">
      <rect x="0.5" y="0" width="21" height="7" rx="1.8" fill="#716e78" />
      <rect x="0.5" y="10" width="21" height="7" rx="1.8" fill="#716e78" />
      <path stroke="#fff" strokeWidth="1.3" d="M13.5 3.6h6M8.5 13.6h11" />
    </svg>
  );
}

function Avatar() {
  return (
    <svg className="h-11 w-11" viewBox="0 0 44 44" aria-hidden="true">
      <defs>
        <clipPath id="avatar-clip">
          <circle cx="22" cy="22" r="22" />
        </clipPath>
      </defs>
      <g clipPath="url(#avatar-clip)">
        <rect width="44" height="44" fill="#ebebea" />
        <path fill="#fff" d="M5 39 Q8 31 18 28 L26 28 Q36 31 39 39 L40 46 4 46Z" />
        <path fill="#fff" d="M13 17 Q10 6 18 6 Q24 3 29 7 Q33 9 30 18Z" />
        <path fill="#f7f7f6" stroke="#e9e9e8" strokeWidth="0.5" d="M15 12 Q20 12 23 10 Q26 12 29 12 Q31 26 25 28 L26 32 22 42 17 32 18 28 Q12 25 15 12Z" />
        <path stroke="#e4e4e3" strokeWidth="0.8" d="M16 42.8h12" />
      </g>
    </svg>
  );
}

const navItems = [
  { name: 'Home', Icon: FaHouse },
  { name: 'Projects', Icon: FaMap },
  { name: 'Datasets', Icon: FaDatabase },
  { name: 'Catalog', Icon: FaGlobe },
  { name: 'Settings', Icon: FaGears },
];

function Section({ title, tracking, children }: { title: string; tracking: string; children: ReactNode }) {
  return (
    <section className="h-[367.6px]">
      <div className="flex h-[49.6px] items-center justify-between border-b border-[#dadbe2] pb-[9px]">
        <h2 className={`text-[24px] font-[370] text-[#57545f] ${tracking}`}>{title}</h2>
        <a className="flex items-center pr-[10px] font-['Noto_Sans',sans-serif] text-[16px] font-medium tracking-[0.12px] text-[#2bb381]">
          See All
          <svg className="ml-[14.5px] h-[14px] w-[9px]" viewBox="0 0 9 14" fill="none" stroke="#2bb381" strokeWidth="2" aria-hidden="true">
            <path d="M1 1l6 6-6 6" />
          </svg>
        </a>
      </div>
      <div className="mt-[19.4px] grid grid-cols-4 gap-6">{children}</div>
    </section>
  );
}

function Card({ title, tracking, updated, children }: { title: string; tracking: string; updated: string; children: ReactNode }) {
  return (
    <article className="h-[298.6px] rounded bg-white shadow-[0_1px_12px_rgba(58,53,65,0.1)]">
      {children}
      <div className="pt-[16.5px] pr-[29.5px] pl-[29px]">
        <div className="flex items-center justify-between">
          <h3 className={`h-7 text-[19px] leading-7 font-[350] whitespace-nowrap text-[#4f4d58] ${tracking}`}>{title}</h3>
          <svg className="mt-[1px] mr-1 h-[21px] w-[6px]" viewBox="0 0 6 21" fill="#716e78" aria-hidden="true">
            <circle cx="3" cy="3" r="2.8" />
            <circle cx="3" cy="10.5" r="2.8" />
            <circle cx="3" cy="18" r="2.8" />
          </svg>
        </div>
        <p className="mt-[18.4px] text-[14.5px] leading-5 tracking-[0.41px] text-[#8b8a92]">{updated}</p>
      </div>
    </article>
  );
}

function AddButton() {
  return (
    <button className="absolute top-[124px] left-1/2 flex h-[42px] w-[42px] -translate-x-[21.4px] items-center justify-center rounded-full bg-[#9e9e9e]">
      <svg className="h-[18px] w-[18px]" viewBox="0 0 18 18" stroke="#fff" strokeWidth="4" strokeLinecap="round" aria-label="Add">
        <path d="M9 2v14M2 9h14" />
      </svg>
    </button>
  );
}

export default function App() {
  return (
    <div className="flex h-[1079px] w-full flex-col overflow-hidden bg-[#f3f4fa] font-['Open_Sans',sans-serif]">
      <header className="relative z-10 flex h-[62px] shrink-0 items-center justify-between bg-white shadow-[0_1px_0_#a9a8af,0_2px_1px_rgba(58,53,65,0.2)]">
        <div className="flex items-center pl-[15px]">
          <Logo />
          <h1 className="mt-[1px] ml-[12px] text-[19px] font-semibold tracking-[0.4px] text-[#55525d]">Workspace</h1>
          <span className="ml-[9px] h-[10px] w-px bg-[#dddde0]" />
        </div>
        <div className="flex items-center pr-[19px]">
          <FaBook className="h-[22px] w-5 text-[#716e78]" />
          <span className="ml-[23px]">
            <ServerIcon />
          </span>
          <span className="ml-[15px] h-[55px] w-px bg-[#e4e4e7]" />
          <span className="ml-[15px]">
            <Avatar />
          </span>
        </div>
      </header>
      <div className="flex min-h-0 flex-1">
        <nav className="w-16 shrink-0 border-r border-[#e0e0e5] bg-white pt-[11px]">
          {navItems.map(({ name, Icon }, i) => (
            <a
              key={name}
              aria-label={name}
              className={
                i === 0
                  ? 'flex h-[57.6px] items-center justify-center bg-[#eef8f4] pr-px text-[#2bb381]'
                  : 'flex h-[57.6px] items-center justify-center pr-px text-[#716e78]'
              }
            >
              <Icon className="h-6 w-6" />
            </a>
          ))}
        </nav>
        <main className="flex min-w-0 flex-1 flex-col gap-[115px] pt-[48.6px] pr-[80.4px] pl-[80px]">
          <Section title="Recent Projects" tracking="tracking-[0.22px]">
            <Card title="Munchen" tracking="tracking-[-0.05px]" updated="Last updated: about 16 hours ago">
              <MunichMap />
            </Card>
            <Card title="Augsburg" tracking="tracking-[0.68px]" updated="Last updated: about 20 hours ago">
              <AugsburgProjectMap />
            </Card>
            <Card title="Dresden" tracking="tracking-[0.3px]" updated="Last updated: about 20 hours ago">
              <DresdenMap />
            </Card>
            <div className="relative h-[298.6px] rounded shadow-[0_1px_12px_rgba(58,53,65,0.1)]">
              <BlankMap />
              <AddButton />
            </div>
          </Section>
          <Section title="Recent Datasets" tracking="tracking-[0.5px]">
            <Card title="augsburg_carsharing" tracking="tracking-[0.7px]" updated="Last updated: about 20 hours ago">
              <CarsharingMap />
            </Card>
            <Card title="augsburg_discount_supermarket" tracking="tracking-[0.55px]" updated="Last updated: about 20 hours ago">
              <SupermarketMap />
            </Card>
            <Card title="augsburg_chemist" tracking="tracking-[0.68px]" updated="Last updated: about 20 hours ago">
              <ChemistMap />
            </Card>
            <div className="relative h-[298.6px] rounded bg-white bg-[linear-gradient(to_right,#f3f3f3_1px,transparent_1px),linear-gradient(to_bottom,#f3f3f3_1px,transparent_1px)] bg-[size:5.28px_5.28px] bg-[position:1.3px_1.3px] shadow-[0_1px_12px_rgba(58,53,65,0.1)]">
              <AddButton />
            </div>
          </Section>
        </main>
        <div className="mt-[2px] h-[670px] w-[5px] shrink-0 rounded-b-[3px] bg-[#bdbdbd]" />
      </div>
    </div>
  );
}
